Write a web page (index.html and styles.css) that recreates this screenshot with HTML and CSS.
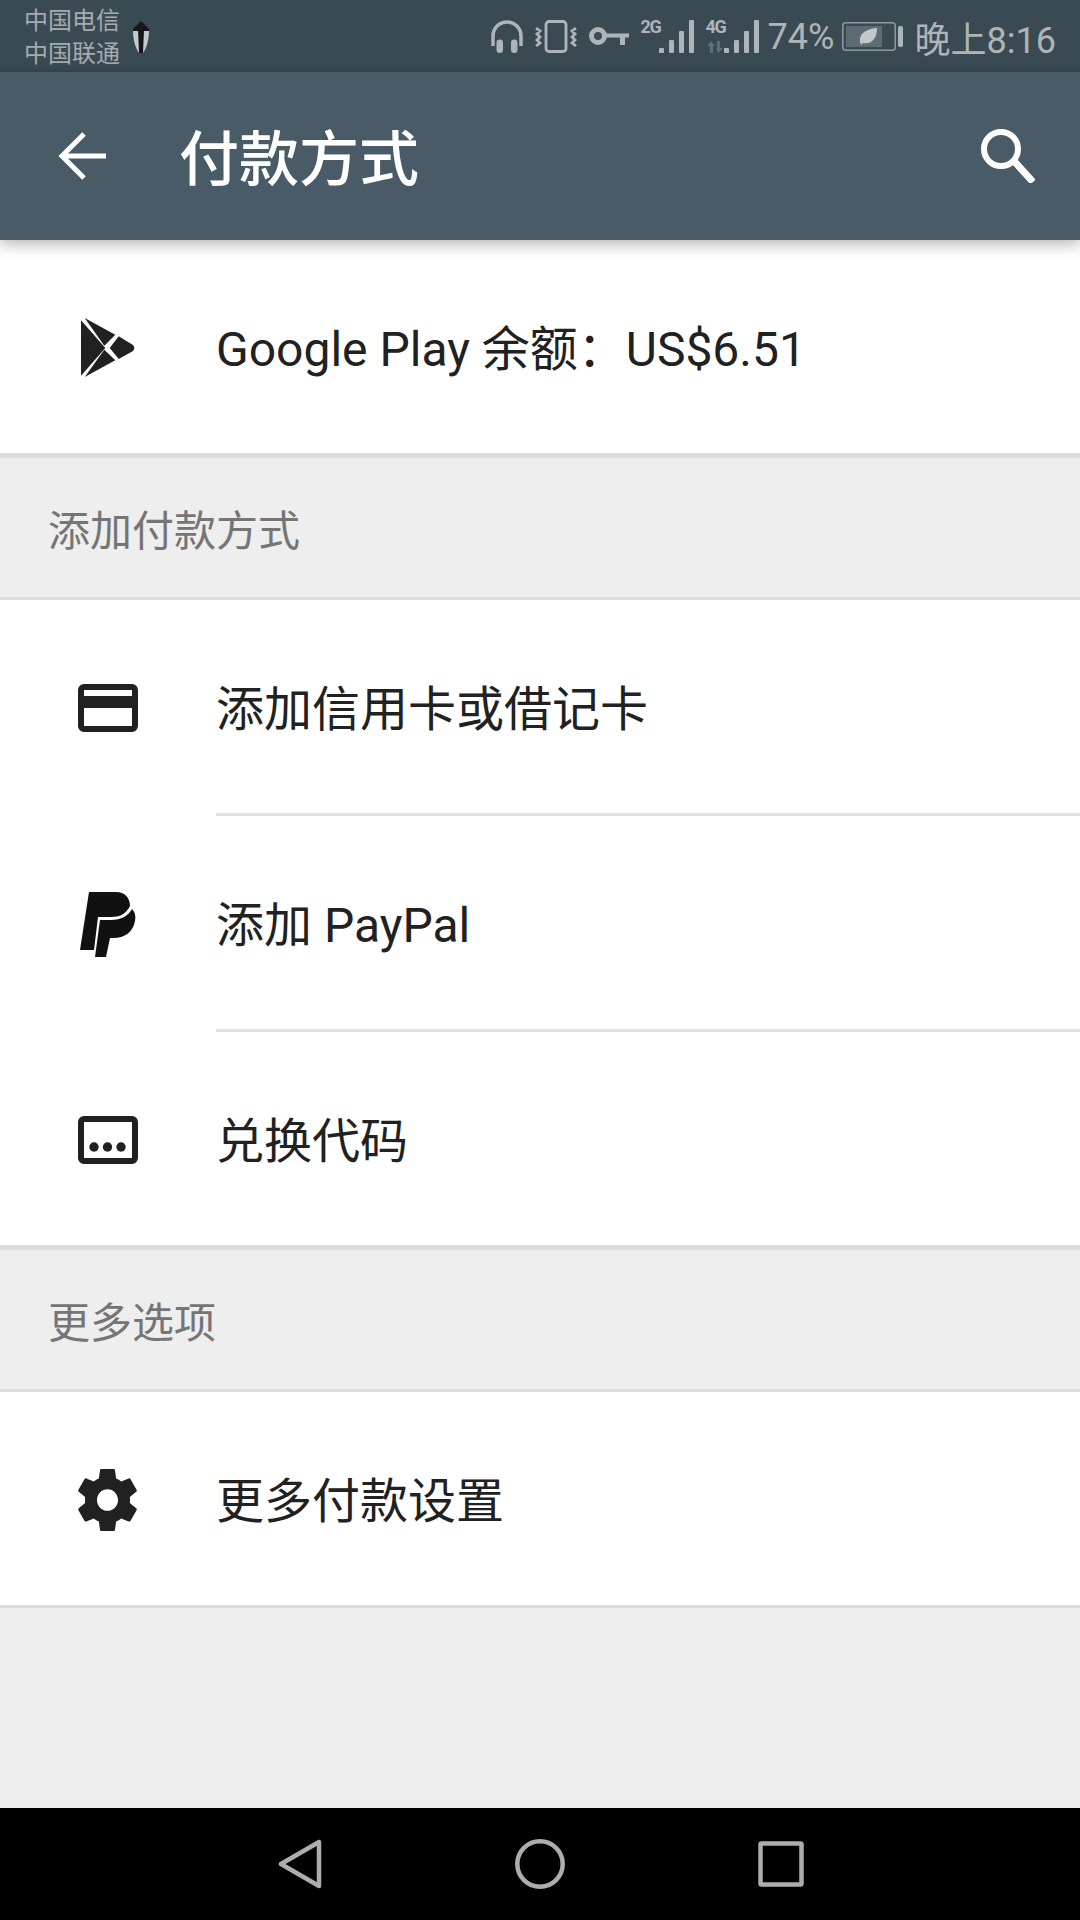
FILE: index.html
```html
<!DOCTYPE html>
<html lang="zh-CN">
<head>
    <meta charset="UTF-8">
    <meta name="viewport" content="width=device-width, initial-scale=1.0">
    <title>付款方式</title>
    <link rel="stylesheet" href="styles.css">
</head>
<body>
    <div class="screen">
        <div class="status-bar">
            <div class="carriers">
                <span>中国电信</span>
                <span>中国联通</span>
            </div>
            <svg class="lantern" width="16" height="32" viewBox="0 0 16 32">
                <path d="M0 9h16c0 11-3 19-6 23H6C3 28 0 20 0 9z" fill="#c5cbcd"/>
                <path d="M5 9h6l-1 23H6z" fill="#14181b"/>
                <path d="M8 0l3 3 5 5v2H0V8l5-5z" fill="#14181b"/>
            </svg>
            <div class="status-right">
                <svg width="32" height="33" viewBox="0 0 32 33" fill="none" stroke="#adb5b8">
                    <path d="M2 26V16a14 14 0 0 1 28 0v10" stroke-width="3.5"/>
                    <rect x="5.500" y="19.500" width="6.500" height="13.500" rx="3.200" fill="#adb5b8" stroke="none"/>
                    <rect x="20" y="19.500" width="6.500" height="13.500" rx="3.200" fill="#adb5b8" stroke="none"/>
                </svg>
                <svg width="42" height="33" viewBox="0 0 42 33" fill="none" stroke="#adb5b8" stroke-width="2.800">
                    <rect x="11" y="1.500" width="20" height="30" rx="3"/>
                    <path d="M1 8l4 3-3 3 3 3-3 3 3 3-4 3M41 8l-4 3 3 3-3 3 3 3-3 3 4 3"/>
                </svg>
                <svg width="40" height="18" viewBox="0 0 40 18" fill="none" stroke="#adb5b8">
                    <circle cx="9" cy="9" r="6.500" stroke-width="5"/>
                    <path d="M15 8.500h25" stroke-width="4"/>
                    <path d="M33.500 8.500V18" stroke-width="5"/>
                </svg>
                <div class="signal">
                    <span class="net">2G</span>
                    <div class="bars">
                        <i class="b1"></i><i class="b2"></i><i class="b3"></i><i class="b4"></i>
                    </div>
                </div>
                <div class="signal second">
                    <span class="net">4G</span>
                    <svg class="arrows" width="16" height="12" viewBox="0 0 16 12" fill="#5f6f77">
                        <path d="M4 0l4 5H6v7H3V5H0z"/>
                        <path d="M10 0h3v7h3l-4.500 5L9 7h1z"/>
                    </svg>
                    <div class="bars">
                        <i class="b1"></i><i class="b2"></i><i class="b3"></i><i class="b4"></i>
                    </div>
                </div>
                <span class="pct">74%</span>
                <svg class="battery" width="61" height="29" viewBox="0 0 61 29">
                    <rect x="0.750" y="0.750" width="52.500" height="27.500" rx="3" fill="none" stroke="#8f999d" stroke-width="1.500"/>
                    <rect x="4" y="4" width="36" height="21" fill="#5d6b73"/>
                    <rect x="56" y="4" width="5" height="21" rx="2" fill="#adb5b8"/>
                    <path d="M19 23c-4-11 5-16 16-17 0 10-5 17-14 15z" fill="#c2c8ca"/>
                </svg>
                <span class="clock">晚上8:16</span>
            </div>
        </div>

        <header class="app-bar">
            <svg class="back" width="48" height="48" viewBox="0 0 48 48" fill="none" stroke="#fff" stroke-width="5">
                <path d="M48 24H4M26 2L4 24l22 22"/>
            </svg>
            <h1>付款方式</h1>
            <svg class="search" width="54" height="54" viewBox="0 0 54 54" fill="none" stroke="#fff">
                <circle cx="20" cy="20" r="17" stroke-width="6"/>
                <path d="M32 31l20 22" stroke-width="7"/>
            </svg>
        </header>

        <div class="row thick">
            <div class="row-icon play">
                <svg width="54" height="60" viewBox="0 0 54 60" fill="#212121">
                    <path d="M0 2.300L24.300 30 0 57.700z"/>
                    <path d="M3.700 0l30.600 16.700-11 11z"/>
                    <path d="M37.700 18.300L52 27q2.500 3 0 6l-14.300 8-9-11z"/>
                    <path d="M3.700 59l30.600-16.700-11-10.600z"/>
                </svg>
            </div>
            <span>Google Play 余额：US$6.51</span>
        </div>

        <div class="section-title">添加付款方式</div>

        <div class="row">
            <div class="row-icon">
                <svg width="60" height="48" viewBox="0 0 60 48" fill="#212121">
                    <path fill-rule="evenodd" d="M6 0h48a6 6 0 0 1 6 6v36a6 6 0 0 1-6 6H6a6 6 0 0 1-6-6V6a6 6 0 0 1 6-6zM6 6v6h48V6zM6 24v18h48V24z"/>
                </svg>
            </div>
            <span>添加信用卡或借记卡</span>
        </div>
        <div class="inset-line"></div>
        <div class="row">
            <div class="row-icon paypal">
                <svg width="56" height="66" viewBox="0 0 56 66" fill="#111">
                    <path d="M9 1h27c9 0 14 6 14 14-4 8-10 11-19 11H18l-4 33H0z"/>
                    <path d="M20 29h11c10 0 17-4 21-11 3 3 4 7 3 12-2 11-10 17-22 17h-3l-4 19H15z"/>
                </svg>
            </div>
            <span>添加 PayPal</span>
        </div>
        <div class="inset-line"></div>
        <div class="row thick">
            <div class="row-icon">
                <svg width="60" height="48" viewBox="0 0 60 48" fill="#212121">
                    <path fill-rule="evenodd" d="M6 0h48a6 6 0 0 1 6 6v36a6 6 0 0 1-6 6H6a6 6 0 0 1-6-6V6a6 6 0 0 1 6-6zM6 6v36h48V6z"/>
                    <circle cx="16" cy="31" r="4.700"/>
                    <circle cx="29.500" cy="31" r="4.700"/>
                    <circle cx="43" cy="31" r="4.700"/>
                </svg>
            </div>
            <span>兑换代码</span>
        </div>

        <div class="section-title">更多选项</div>

        <div class="row thin">
            <div class="row-icon">
                <svg width="59" height="62" viewBox="2.200 2 19.600 20" fill="#212121" preserveAspectRatio="none">
                    <path d="M19.430 12.980c.04-.32.07-.64.07-.98s-.03-.66-.07-.98l2.110-1.650c.19-.15.24-.42.12-.64l-2-3.460c-.12-.22-.39-.3-.61-.22l-2.490 1c-.52-.4-1.080-.73-1.690-.98l-.38-2.650C14.460 2.180 14.250 2 14 2h-4c-.25 0-.46.18-.49.42l-.38 2.650c-.61.25-1.170.59-1.690.98l-2.490-1c-.23-.09-.49 0-.61.22l-2 3.460c-.13.22-.07.49.12.64l2.110 1.650c-.04.32-.07.65-.07.98s.03.66.07.98l-2.110 1.650c-.19.15-.24.42-.12.64l2 3.460c.12.22.39.3.61.22l2.490-1c.52.4 1.080.73 1.690.98l.38 2.650c.03.24.24.42.49.42h4c.25 0 .46-.18.49-.42l.38-2.650c.61-.25 1.170-.59 1.690-.98l2.490 1c.23.09.49 0 .61-.22l2-3.460c.12-.22.07-.49-.12-.64l-2.110-1.650zM12 15.500c-1.930 0-3.500-1.570-3.500-3.500s1.570-3.500 3.500-3.500 3.500 1.570 3.500 3.500-1.570 3.500-3.500 3.500z"/>
                </svg>
            </div>
            <span>更多付款设置</span>
        </div>

        <div class="filler"></div>

        <nav class="nav-bar">
            <svg width="44" height="50" viewBox="0 0 44 50" fill="none" stroke="#adadad" stroke-width="4.500" stroke-linejoin="round">
                <path d="M41 3v44L3 25z"/>
            </svg>
            <svg width="50" height="50" viewBox="0 0 50 50" fill="none" stroke="#adadad" stroke-width="4.500">
                <ellipse cx="25" cy="25" rx="22.700" ry="22.700"/>
            </svg>
            <svg width="46" height="46" viewBox="0 0 46 46" fill="none" stroke="#adadad" stroke-width="4.500" stroke-linejoin="round">
                <rect x="2.500" y="2.500" width="41" height="41" rx="1"/>
            </svg>
        </nav>
    </div>
</body>
</html>
```

FILE: styles.css
```css
* {
    box-sizing: border-box;
}
body {
    margin: 0;
    padding: 0;
    background-color: #eeeeee;
    font-family: Roboto, "Noto Sans CJK SC", sans-serif;
}
.screen {
    width: 1080px;
    height: 1920px;
    display: flex;
    flex-direction: column;
    overflow: hidden;
}
.status-bar {
    height: 72px;
    background-color: #3a4a53;
    color: #adb5b8;
    display: flex;
    align-items: center;
    padding: 0 24px 0 24px;
}
.carriers {
    display: flex;
    flex-direction: column;
    font-size: 24px;
    line-height: 33px;
    color: #a3acb0;
    margin-top: 4px;
}
.lantern {
    margin-left: 13px;
    margin-top: 2px;
}
.status-right {
    margin-left: auto;
    display: flex;
    align-items: center;
    gap: 12px;
}
.status-right svg {
    flex: none;
}
.signal {
    position: relative;
    width: 53px;
    height: 33px;
}
.net {
    position: absolute;
    left: 0;
    top: 0;
    font-size: 18px;
    line-height: 14px;
    font-weight: 700;
    letter-spacing: -1.5px;
}
.arrows {
    position: absolute;
    left: 1px;
    bottom: 0;
}
.bars {
    position: absolute;
    right: 0;
    bottom: 0;
    display: flex;
    align-items: flex-end;
    gap: 5px;
}
.bars i {
    display: block;
    width: 5px;
    background-color: #adb5b8;
    border-radius: 1px;
}
.b1 { height: 5px; }
.b2 { height: 13px; }
.b3 { height: 22px; }
.b4 { height: 33px; }
.pct {
    width: 64px;
    font-size: 36px;
    margin-left: -3px;
    margin-top: 2px;
}
.battery {
    margin-left: -2px;
}
.clock {
    font-size: 36px;
    white-space: nowrap;
    margin-top: 2px;
}
.app-bar {
    position: relative;
    height: 168px;
    background-color: #485b67;
    display: flex;
    align-items: center;
    padding: 0 45px 0 58px;
    box-shadow: 0 4px 14px rgba(0, 0, 0, 0.3);
}
.app-bar h1 {
    margin: 0 0 3px 73px;
    font-size: 60px;
    font-weight: 500;
    color: #fff;
}
.back {
    flex: none;
}
.search {
    margin-left: auto;
}
.row {
    height: 213px;
    background-color: #fff;
    display: flex;
    align-items: center;
    font-size: 48px;
    color: #212121;
    flex: none;
}
.row > span {
    margin-bottom: 3px;
}
.row.thick {
    height: 218px;
    border-bottom: 5px solid #dcdcdc;
}
.row.thin {
    height: 216px;
    border-bottom: 3px solid #dcdcdc;
}
.row-icon {
    flex: none;
    width: 216px;
    padding: 3px 0 0 78px;
    display: flex;
    align-items: center;
}
.row-icon.play {
    padding-left: 81px;
}
.row-icon.paypal {
    padding-left: 80px;
}
.inset-line {
    height: 3px;
    flex: none;
    background-color: #fff;
    background-image: linear-gradient(#e0e0e0, #e0e0e0);
    background-position: 216px 0;
    background-repeat: no-repeat;
}
.section-title {
    height: 142px;
    flex: none;
    padding-left: 48px;
    display: flex;
    align-items: center;
    font-size: 42px;
    color: #757575;
    background-color: #eeeeee;
    border-bottom: 3px solid #dcdcdc;
}
.filler {
    flex: 1;
}
.nav-bar {
    height: 112px;
    flex: none;
    background-color: #000;
    display: flex;
    align-items: center;
    padding-left: 278px;
    gap: 193px;
}
```
